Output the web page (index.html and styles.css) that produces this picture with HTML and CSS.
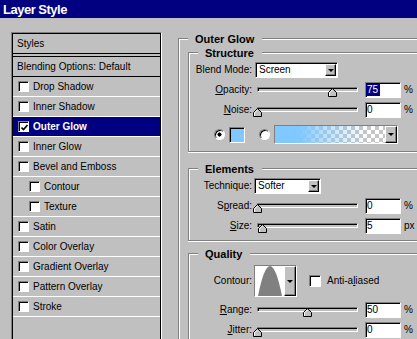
FILE: index.html
```html
<!DOCTYPE html>
<html lang="en">
<head>
    <meta charset="UTF-8">
    <title>Layer Style</title>
    <link rel="stylesheet" href="styles.css">
</head>
<body>

    <div class="titlebar">Layer Style</div>

    <div class="dialog">

        <!-- style list -->
        <div class="styles-panel">
            <div class="styles-inner">
                <div class="styles-head">Styles</div>
                <div class="styles-blend">Blending Options: Default</div>
                <div class="style-item"><span class="check"></span>Drop Shadow</div>
                <div class="style-item"><span class="check"></span>Inner Shadow</div>
                <div class="style-item selected">
                    <span class="check"><svg width="7" height="7" viewBox="0 0 7 7"><path d="M0.5 3.5 L2.5 5.5 L6.5 1" fill="none" stroke="#000" stroke-width="1.6"/></svg></span>Outer Glow
                </div>
                <div class="style-item"><span class="check"></span>Inner Glow</div>
                <div class="style-item"><span class="check"></span>Bevel and Emboss</div>
                <div class="style-item sub"><span class="check"></span>Contour</div>
                <div class="style-item sub"><span class="check"></span>Texture</div>
                <div class="style-item"><span class="check"></span>Satin</div>
                <div class="style-item"><span class="check"></span>Color Overlay</div>
                <div class="style-item"><span class="check"></span>Gradient Overlay</div>
                <div class="style-item"><span class="check"></span>Pattern Overlay</div>
                <div class="style-item"><span class="check"></span>Stroke</div>
            </div>
        </div>

        <!-- options -->
        <div class="options">
            <div class="group group-outer">
                <div class="group-title">Outer Glow</div>

                <div class="group group-sub group-structure">
                    <div class="group-title">Structure</div>
                    <div class="rows">
                        <div class="row">
                            <span class="label">Blend Mode:</span>
                            <div class="select select-blend"><span class="select-text">Screen</span><span class="drop-btn"></span></div>
                        </div>
                        <div class="row">
                            <span class="label"><u>O</u>pacity:</span>
                            <div class="slider"><div class="track"></div><svg class="thumb" style="--v:75" width="9" height="9" viewBox="0 0 9 9"><polygon points="4.5,0.5 8.5,4.5 8.5,8.5 0.5,8.5 0.5,4.5" fill="#c0c0c0" stroke="#000"/><polyline points="1.5,8 1.5,4.9 4.5,1.9" fill="none" stroke="#fff"/></svg></div>
                            <div class="num"><span class="sel">75</span></div>
                            <span class="unit">%</span>
                        </div>
                        <div class="row">
                            <span class="label"><u>N</u>oise:</span>
                            <div class="slider"><div class="track"></div><svg class="thumb" style="--v:0" width="9" height="9" viewBox="0 0 9 9"><polygon points="4.5,0.5 8.5,4.5 8.5,8.5 0.5,8.5 0.5,4.5" fill="#c0c0c0" stroke="#000"/><polyline points="1.5,8 1.5,4.9 4.5,1.9" fill="none" stroke="#fff"/></svg></div>
                            <div class="num"><span>0</span></div>
                            <span class="unit">%</span>
                        </div>
                        <div class="row color-row">
                            <span class="radio on"></span>
                            <span class="swatch"></span>
                            <span class="radio"></span>
                            <div class="gradient-pick"><span class="gradient-bar"></span><span class="drop-btn"></span></div>
                        </div>
                    </div>
                </div>

                <div class="group group-sub group-elements">
                    <div class="group-title">Elements</div>
                    <div class="rows">
                        <div class="row">
                            <span class="label">Technique:</span>
                            <div class="select select-technique"><span class="select-text">Softer</span><span class="drop-btn"></span></div>
                        </div>
                        <div class="row">
                            <span class="label">S<u>p</u>read:</span>
                            <div class="slider"><div class="track"></div><svg class="thumb" style="--v:0" width="9" height="9" viewBox="0 0 9 9"><polygon points="4.5,0.5 8.5,4.5 8.5,8.5 0.5,8.5 0.5,4.5" fill="#c0c0c0" stroke="#000"/><polyline points="1.5,8 1.5,4.9 4.5,1.9" fill="none" stroke="#fff"/></svg></div>
                            <div class="num"><span>0</span></div>
                            <span class="unit">%</span>
                        </div>
                        <div class="row">
                            <span class="label"><u>S</u>ize:</span>
                            <div class="slider"><div class="track"></div><svg class="thumb" style="--v:5" width="9" height="9" viewBox="0 0 9 9"><polygon points="4.5,0.5 8.5,4.5 8.5,8.5 0.5,8.5 0.5,4.5" fill="#c0c0c0" stroke="#000"/><polyline points="1.5,8 1.5,4.9 4.5,1.9" fill="none" stroke="#fff"/></svg></div>
                            <div class="num"><span>5</span></div>
                            <span class="unit">px</span>
                        </div>
                    </div>
                </div>

                <div class="group group-sub group-quality">
                    <div class="group-title">Quality</div>
                    <div class="rows">
                        <div class="row row-contour">
                            <span class="label">Contour:</span>
                            <div class="contour">
                                <span class="contour-preview"><svg width="29" height="30" viewBox="0 0 29 30"><path d="M3 30 Q15 -30 27 30 Z" fill="#808080"/></svg></span>
                                <span class="drop-btn"></span>
                            </div>
                            <span class="check check-anti"></span>
                            <span class="check-label">Anti-a<u>l</u>iased</span>
                        </div>
                        <div class="row">
                            <span class="label"><u>R</u>ange:</span>
                            <div class="slider"><div class="track"></div><svg class="thumb" style="--v:50" width="9" height="9" viewBox="0 0 9 9"><polygon points="4.5,0.5 8.5,4.5 8.5,8.5 0.5,8.5 0.5,4.5" fill="#c0c0c0" stroke="#000"/><polyline points="1.5,8 1.5,4.9 4.5,1.9" fill="none" stroke="#fff"/></svg></div>
                            <div class="num"><span>50</span></div>
                            <span class="unit">%</span>
                        </div>
                        <div class="row">
                            <span class="label"><u>J</u>itter:</span>
                            <div class="slider"><div class="track"></div><svg class="thumb" style="--v:0" width="9" height="9" viewBox="0 0 9 9"><polygon points="4.5,0.5 8.5,4.5 8.5,8.5 0.5,8.5 0.5,4.5" fill="#c0c0c0" stroke="#000"/><polyline points="1.5,8 1.5,4.9 4.5,1.9" fill="none" stroke="#fff"/></svg></div>
                            <div class="num"><span>0</span></div>
                            <span class="unit">%</span>
                        </div>
                    </div>
                </div>

            </div>
        </div>

    </div>

</body>
</html>
```

FILE: styles.css
```css
/* Layer Style dialog - classic grey UI */
:root {
    --face: #c0c0c0;
    --shadow: #808080;
    --light: #fff;
    --navy: #000080;
    --glow: #80c8ff;
}

html, body {
    margin: 0;
    padding: 0;
}

body {
    width: 417px;
    height: 339px;
    overflow: hidden;
    background: var(--face);
    color: #000;
    font: 10px/1.15 "Liberation Sans", Arial, sans-serif;
}

u { text-decoration: underline; text-underline-offset: 1px; }

/* title bar */
.titlebar {
    height: 17px;
    padding: 1px 0 0 3px;
    background: var(--navy);
    color: #fff;
    font-size: 13px;
    font-weight: bold;
    line-height: 17px;
    letter-spacing: -0.5px;
}

.dialog {
    display: flex;
    align-items: flex-start;
    padding: 14px 0 0 11px;
}

/* ---- style list ---- */
.styles-panel {
    flex-shrink: 0;
    width: 151px;
    height: 307px;
    box-sizing: border-box;
    border: 1px solid;
    border-color: var(--shadow) var(--light) var(--light) var(--shadow);
    border-bottom: 0;
}
.styles-inner {
    height: 100%;
    box-sizing: border-box;
    border: 1px solid #000;
    border-bottom: 0;
}

.styles-head, .styles-blend {
    height: 19px;
    line-height: 19px;
    padding-left: 4px;
}
.styles-head { border-bottom: 4px double #000; }
.styles-blend { border-bottom: 1px solid #000; }

.style-item {
    display: flex;
    align-items: center;
    gap: 4px;
    height: 19px;
    line-height: 19px;
    padding-left: 5px;
    border-bottom: 1px solid var(--light);
}
.style-item.sub { padding-left: 16px; }
.style-item.selected {
    background: var(--navy);
    color: #fff;
    font-weight: bold;
}

.check {
    flex-shrink: 0;
    display: flex;
    align-items: center;
    justify-content: center;
    width: 11px;
    height: 11px;
    box-sizing: border-box;
    border: 1px solid;
    border-color: var(--shadow) var(--light) var(--light) var(--shadow);
    box-shadow: inset 1px 1px 0 #000;
    background: #fff;
}
.check svg { margin: 1px 0 0 1px; }

/* ---- option groups ---- */
.options {
    flex-shrink: 0;
    width: 239px;
    margin: 6px 0 0 16px;
}

.group {
    border-top: 1px solid var(--shadow);
    border-left: 1px solid var(--shadow);
    box-shadow: inset 1px 1px 0 var(--light);
}
.group-title {
    width: fit-content;
    margin: -6px 0 0 9px;
    padding: 0 8px 0 7px;
    background: var(--face);
    font-size: 11px;
    font-weight: bold;
    line-height: 13px;
}

.group-outer {
    height: 300px;
    padding-left: 9px;
}
.group-outer > .group-title { margin-left: 0; }

.group-sub {
    border-bottom: 1px solid var(--shadow);
    box-shadow: inset 1px 1px 0 var(--light), 0 1px 0 var(--light);
}
.group-structure { margin-top: 6px; padding-bottom: 7px; }
.group-elements { margin-top: 16px; padding-bottom: 6px; }
.group-quality {
    margin-top: 12px;
    height: 85px;
    border-bottom: 0;
    box-shadow: inset 1px 1px 0 var(--light);
}

.rows {
    display: flex;
    flex-direction: column;
    gap: 4px;
    margin-top: 2px;
}
.row {
    display: flex;
    align-items: center;
    height: 16px;
}
.label {
    flex-shrink: 0;
    width: 63px;
    margin-right: 2px;
    text-align: right;
    white-space: nowrap;
}

/* sunken field look */
.select, .num, .contour, .gradient-pick, .swatch {
    box-sizing: border-box;
    border: 1px solid;
    border-color: var(--shadow) var(--light) var(--light) var(--shadow);
    box-shadow: inset 1px 1px 0 #000;
    background: #fff;
}

.select {
    display: flex;
    align-items: center;
    height: 16px;
    padding: 1px;
}
.select-blend { width: 83px; margin-left: 1px; }
.select-technique { width: 67px; }
.select-text { flex: 1; padding-left: 2px; }

.drop-btn {
    flex-shrink: 0;
    display: flex;
    align-items: center;
    justify-content: center;
    width: 11px;
    height: 12px;
    box-sizing: border-box;
    border: 1px solid;
    border-color: var(--light) #000 #000 var(--light);
    box-shadow: inset -1px -1px 0 var(--shadow);
    background: var(--face);
}
.drop-btn::after {
    content: "";
    border-left: 3px solid transparent;
    border-right: 3px solid transparent;
    border-top: 3px solid #000;
}

/* sliders */
.slider {
    position: relative;
    flex-shrink: 0;
    width: 104px;
    height: 16px;
    box-sizing: border-box;
    padding-left: 3px;
}
.track {
    width: 101px;
    height: 5px;
    margin-top: 5px;
    box-sizing: border-box;
    border: 1px solid;
    border-color: var(--shadow) var(--light) var(--light) var(--shadow);
    box-shadow: inset 1px 1px 0 #000;
    background: var(--face);
}
.thumb {
    position: absolute;
    top: 6px;
    left: calc(var(--v) * 1px - 1px);
}

.num {
    display: flex;
    align-items: center;
    width: 36px;
    height: 16px;
    margin-left: 7px;
}
.num span {
    padding: 0 2px 0 1px;
    line-height: 12px;
}
.num .sel {
    background: var(--navy);
    color: #fff;
}
.unit { margin-left: 3px; }

/* color row */
.color-row {
    height: 19px;
    margin-top: 3px;
    padding-left: 25px;
}
.radio {
    flex-shrink: 0;
    width: 11px;
    height: 11px;
    box-sizing: border-box;
    border-radius: 50%;
    border: 1px solid;
    border-color: var(--shadow) var(--light) var(--light) var(--shadow);
    box-shadow: inset 1px 1px 0 #000;
    background: #fff;
    margin-right: 4px;
}
.radio.on { background: radial-gradient(circle, #000 0 1.8px, #fff 2.3px); }

.swatch {
    width: 16px;
    height: 16px;
    margin-right: 14px;
    background: var(--glow);
}

.gradient-pick {
    display: flex;
    width: 124px;
    height: 19px;
}
.gradient-bar {
    flex: 1;
    background:
        linear-gradient(to right, rgba(128, 200, 255, 1) 0, rgba(128, 200, 255, 1) 22%, rgba(128, 200, 255, 0.55) 45%, rgba(128, 200, 255, 0) 85%),
        conic-gradient(#c6c6c6 25%, #fff 0 50%, #c6c6c6 0 75%, #fff 0) 0 0 / 8px 8px;
}
.gradient-pick .drop-btn { width: 12px; height: 17px; }

/* quality */
.row-contour {
    height: 32px;
    margin: 2px 0 1px;
}
.contour {
    display: flex;
    width: 43px;
    height: 32px;
}
.contour-preview {
    flex: 1;
    display: flex;
    background: #fff;
}
.contour .drop-btn { width: 12px; height: 30px; }

.check-anti {
    width: 12px;
    height: 12px;
    margin: 0 6px 0 12px;
}
```
